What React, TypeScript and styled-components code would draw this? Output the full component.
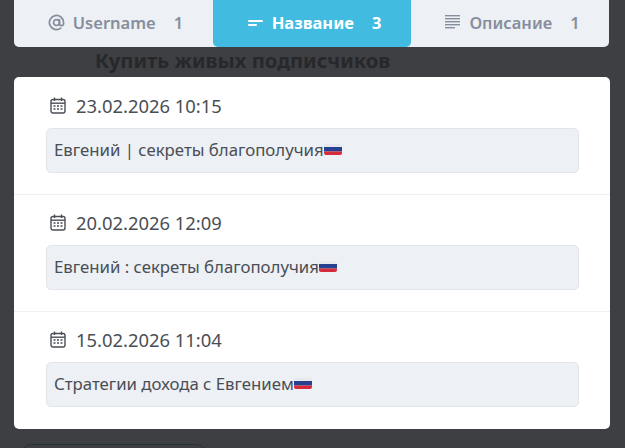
import React from "react";
import styled, { createGlobalStyle } from "styled-components";

const Global = createGlobalStyle`
  html, body { margin: 0; padding: 0; background: #3e3f42; }
  body { width: 625px; height: 448px; overflow: hidden; font-family: "Noto Sans", "Open Sans", sans-serif; }
`;

const Page = styled.div`
  width: 625px;
  height: 448px;
  overflow: hidden;
  background: #3e3f42;
`;

const Tabs = styled.nav`
  display: grid;
  grid-template-columns: 199px 198px 198px;
  width: 595px;
  height: 47px;
  margin-left: 14px;
  background: #edf0f5;
  border-radius: 0 0 5px 5px;
`;

const Tab = styled.div<{ $active?: boolean }>`
  display: flex;
  align-items: center;
  justify-content: center;
  gap: 8px;
  padding: 0 0 2px 4px;
  border-radius: ${(p) => (p.$active ? "0 0 5px 5px" : "0")};
  background: ${(p) => (p.$active ? "#41bbe0" : "transparent")};
  color: ${(p) => (p.$active ? "#ffffff" : "#868e9c")};
  font-size: 16.5px;
  font-weight: ${(p) => (p.$active ? 700 : 600)};
`;

const TabCount = styled.span`
  margin-left: 10px;
`;

const Backdrop = styled.div`
  height: 30px;
  padding: 0 0 4px 95px;
  box-sizing: border-box;
  display: flex;
  align-items: center;
`;

const BackTitle = styled.h1`
  margin: 0;
  font-size: 20.2px;
  line-height: 26px;
  font-weight: 700;
  color: #26282b;
  white-space: nowrap;
`;

const Panel = styled.section`
  width: 596px;
  height: 352px;
  margin-left: 14px;
  background: #ffffff;
  border-radius: 5px;
`;

const Row = styled.article`
  box-sizing: border-box;
  height: 117px;
  padding: 16px 31px 0 32px;
  & + & {
    border-top: 1px solid #edf0f5;
    padding-top: 15px;
  }
`;

const DateLine = styled.div`
  display: flex;
  align-items: center;
  gap: 10px;
  height: 24px;
  padding-left: 4px;
  color: #4a4e55;
  font-size: 18.4px;
`;

const Field = styled.div`
  box-sizing: border-box;
  display: flex;
  align-items: center;
  height: 45px;
  margin-top: 11px;
  padding: 0 7px 2px;
  background: #edf0f5;
  border: 1px solid #e2e5ea;
  border-radius: 5px;
  color: #4a4e55;
  font-size: 16.8px;
  white-space: nowrap;
`;

const BackButton = styled.div`
  width: 186px;
  height: 30px;
  margin: 15px 0 0 20px;
  border: 1px solid #26323a;
  border-radius: 12px;
`;

const At = () => (
  <svg width="17" height="17" viewBox="0 0 24 24" fill="none" stroke="currentColor" strokeWidth="2.4" strokeLinecap="round">
    <circle cx="12" cy="12" r="4.2" />
    <path d="M16.2 8v5.5a2.9 2.9 0 0 0 5.8 0V12a10 10 0 1 0-4 8" />
  </svg>
);

const ShortLines = () => (
  <svg width="17" height="17" viewBox="0 0 17 17" fill="currentColor">
    <rect x="1" y="6" width="15" height="2" rx="1" />
    <rect x="1" y="10" width="9" height="2" rx="1" />
  </svg>
);

const TextLines = () => (
  <svg width="17" height="17" viewBox="0 0 17 17" fill="currentColor">
    <rect x="1" y="1" width="15" height="1.4" />
    <rect x="1" y="4" width="15" height="1.4" />
    <rect x="1" y="7" width="15" height="1.4" />
    <rect x="1" y="10" width="15" height="1.4" />
    <rect x="1" y="13" width="10" height="1.4" />
  </svg>
);

const Calendar = () => (
  <svg width="16" height="17" viewBox="0 0 16 17" fill="none" stroke="#4a4e55">
    <rect x="1" y="2.5" width="14" height="13.5" rx="2" strokeWidth="1.4" />
    <path d="M4.5 0.5v3.5M11.5 0.5v3.5" strokeWidth="1.4" />
    <path d="M1 6.2h14" strokeWidth="1.4" />
    <path d="M3.5 9h2M7 9h2M10.5 9h2M3.5 12h2M7 12h2M10.5 12h2" strokeWidth="1.5" />
  </svg>
);

const Flag = () => (
  <svg width="18" height="11" viewBox="0 0 18 11" role="img" aria-label="🇷🇺">
    <rect width="18" height="11" rx="2" fill="#e8e9ec" />
    <path d="M0 3h18v4.5H0z" fill="#27408f" />
    <path d="M0 7.5h18V9a2 2 0 0 1-2 2H2a2 2 0 0 1-2-2z" fill="#d52b3a" />
  </svg>
);

const rows = [
  { date: "23.02.2026 10:15", text: "Евгений | секреты благополучия" },
  { date: "20.02.2026 12:09", text: "Евгений : секреты благополучия" },
  { date: "15.02.2026 11:04", text: "Стратегии дохода с Евгением" },
];

export default function App() {
  return (
    <Page>
      <Global />
      <Tabs>
        <Tab><At />Username<TabCount>1</TabCount></Tab>
        <Tab $active><ShortLines />Название<TabCount>3</TabCount></Tab>
        <Tab><TextLines />Описание<TabCount>1</TabCount></Tab>
      </Tabs>
      <Backdrop>
        <BackTitle>Купить живых подписчиков</BackTitle>
      </Backdrop>
      <Panel>
        {rows.map((r) => (
          <Row key={r.date}>
            <DateLine><Calendar />{r.date}</DateLine>
            <Field>{r.text}<Flag /></Field>
          </Row>
        ))}
      </Panel>
      <BackButton />
    </Page>
  );
}
